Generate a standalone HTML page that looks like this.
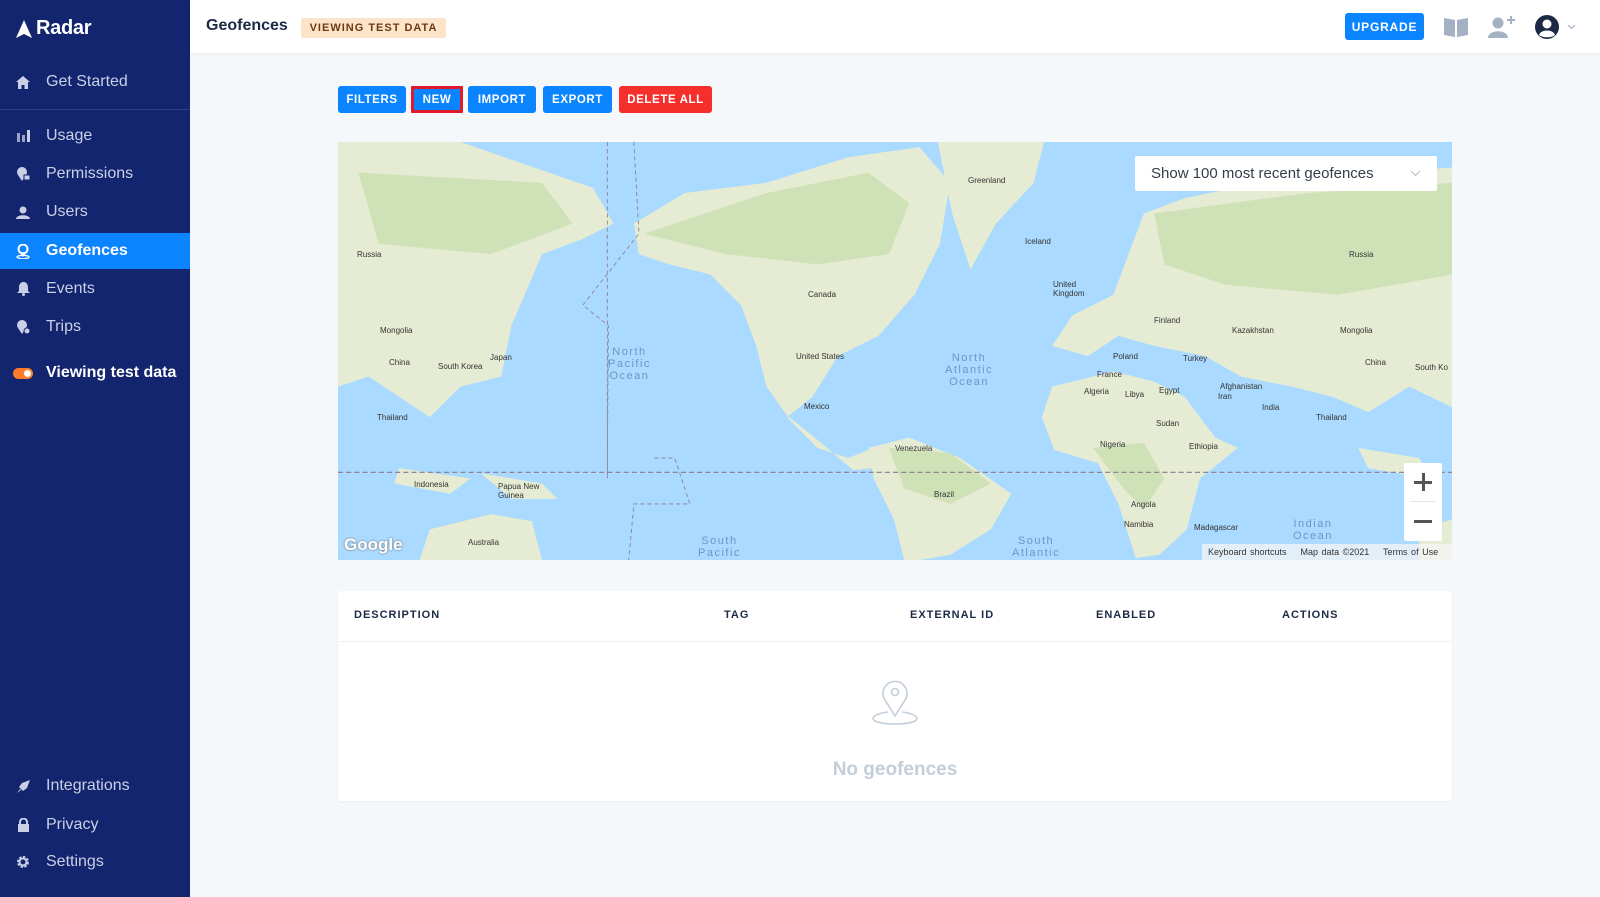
<!DOCTYPE html>
<html><head><meta charset="utf-8"><style>
*{box-sizing:border-box;margin:0;padding:0}
body{width:1600px;height:897px;overflow:hidden;background:#f5f8fb;font-family:"Liberation Sans",sans-serif;position:relative}
.sb{position:absolute;left:0;top:0;width:190px;height:897px;background:#12256e}
.logo{position:absolute;left:16px;top:17px;color:#fff;font-weight:bold;font-size:20px;display:flex;align-items:center;gap:4px;letter-spacing:-0.3px}
.div{position:absolute;left:0;width:190px;height:1px;background:#2d3f86}
.it{position:absolute;left:0;width:190px;height:36px;display:flex;align-items:center;color:#c9d0e6;font-size:16px}
.it .ic{width:46px;display:flex;justify-content:center}
.it.act{background:#0a84ff;color:#fff;font-weight:bold}
.hdr{position:absolute;left:190px;top:0;right:0;height:53px;background:#fff;box-shadow:0 1px 3px rgba(0,0,0,.06)}
.btn{position:absolute;top:86px;height:27px;border-radius:3px;color:#fff;font-weight:bold;font-size:11.5px;letter-spacing:.6px;display:flex;align-items:center;justify-content:center;background:#0a84ff}
.map{position:absolute;left:338px;top:142px;width:1114px;height:418px;background:#aadaff;overflow:hidden}
.lbl{position:absolute;font-size:8px;color:#333}
.ocean{position:absolute;font-size:11px;color:#6d95c4;letter-spacing:1.5px;text-align:center;line-height:12px}
.tbl{position:absolute;left:338px;top:591px;width:1114px;height:210px;background:#fff;border-radius:3px;box-shadow:0 1px 2px rgba(0,0,0,.05)}
.th{position:absolute;top:18px;font-size:11px;font-weight:bold;letter-spacing:1px;color:#1c2a45}
</style></head><body>
<div class="sb">
 <div class="logo"><svg width="16" height="18" viewBox="0 0 16 18"><path d="M8 0L16 18L8 14L0 18Z" fill="#fff"/></svg>Radar</div>
 <div class="div" style="top:109px"></div>
 <div class="it" style="top:64px"><span class="ic"><svg width="14" height="13" viewBox="0 0 14 13"><path d="M7 0L14 6H12V13H8.5V9H5.5V13H2V6H0Z" fill="#c9d0e6"/></svg></span>Get Started</div>
 <div class="it" style="top:118px"><span class="ic"><svg width="13" height="12"><rect x="0" y="3" width="3" height="9" fill="#9aa3c4"/><rect x="5" y="5" width="3" height="7" fill="#9aa3c4"/><rect x="10" y="0" width="3" height="12" fill="#c9d0e6"/></svg></span>Usage</div>
 <div class="it" style="top:156px"><span class="ic"><svg width="14" height="14"><circle cx="6" cy="5" r="5" fill="#c9d0e6"/><path d="M2 8L6 14L10 8Z" fill="#c9d0e6"/><rect x="8" y="8" width="6" height="5" fill="#c9d0e6" stroke="#12256e"/></svg></span>Permissions</div>
 <div class="it" style="top:194px"><span class="ic"><svg width="14" height="13"><circle cx="7" cy="4" r="3.5" fill="#c9d0e6"/><path d="M0 13C0 8 14 8 14 13Z" fill="#c9d0e6"/></svg></span>Users</div>
 <div class="it act" style="top:233px"><span class="ic"><svg width="14" height="15"><circle cx="7" cy="5" r="4.5" fill="none" stroke="#fff" stroke-width="2"/><path d="M3 8L7 13L11 8" fill="#fff"/><ellipse cx="7" cy="13" rx="6" ry="1.6" fill="none" stroke="#fff" stroke-width="1.3"/></svg></span>Geofences</div>
 <div class="it" style="top:271px"><span class="ic"><svg width="13" height="14"><path d="M6.5 0C10 0 11 3 11 6V9L13 11H0L2 9V6C2 3 3 0 6.5 0Z" fill="#c9d0e6"/><circle cx="6.5" cy="12.5" r="1.5" fill="#c9d0e6"/></svg></span>Events</div>
 <div class="it" style="top:309px"><span class="ic"><svg width="14" height="14"><circle cx="6" cy="5" r="5" fill="#c9d0e6"/><path d="M2 8L6 14L10 8Z" fill="#c9d0e6"/><circle cx="11" cy="11" r="3" fill="#c9d0e6" stroke="#12256e"/></svg></span>Trips</div>
 <div class="it" style="top:355px;color:#fff;font-weight:bold"><span class="ic"><span style="width:20px;height:11px;border-radius:6px;background:#ff7a2b;position:relative;display:block"><span style="position:absolute;right:2px;top:2px;width:7px;height:7px;border-radius:50%;background:#fff"></span></span></span>Viewing test data</div>
 <div class="it" style="top:768px"><span class="ic"><svg width="13" height="13"><path d="M13 0L5 3L2 7L6 11L10 8Z" fill="#c9d0e6"/><path d="M3 9L0 13L4 10Z" fill="#c9d0e6"/></svg></span>Integrations</div>
 <div class="it" style="top:807px"><span class="ic"><svg width="11" height="14"><path d="M2 6V4A3.5 3.5 0 0 1 9 4V6" fill="none" stroke="#c9d0e6" stroke-width="2"/><rect x="0" y="6" width="11" height="8" fill="#c9d0e6"/></svg></span>Privacy</div>
 <div class="it" style="top:844px"><span class="ic"><svg width="14" height="14" viewBox="0 0 14 14"><circle cx="7" cy="7" r="4.5" fill="none" stroke="#c9d0e6" stroke-width="3" stroke-dasharray="2.2 1.3"/><circle cx="7" cy="7" r="3.5" fill="none" stroke="#c9d0e6" stroke-width="2"/></svg></span>Settings</div>
</div>
<div class="hdr">
 <div style="position:absolute;left:16px;top:17px;font-size:16px;font-weight:bold;color:#1c2a45">Geofences</div>
 <div style="position:absolute;left:111px;top:18px;width:145px;height:20px;background:#fde3c8;border-radius:2px;color:#6b3a12;font-size:11px;font-weight:bold;letter-spacing:1px;display:flex;align-items:center;justify-content:center">VIEWING TEST DATA</div>
 <div style="position:absolute;left:1155px;top:13px;width:79px;height:27px;background:#0a84ff;border-radius:3px;color:#fff;font-size:12px;font-weight:bold;letter-spacing:.8px;display:flex;align-items:center;justify-content:center">UPGRADE</div>
 <svg style="position:absolute;left:1254px;top:16px" width="24" height="21"><path d="M0 2L11 4V21L0 19Z M13 4L24 2V19L13 21Z" fill="#a3b1c2"/></svg>
 <svg style="position:absolute;left:1298px;top:15px" width="28" height="24"><circle cx="10" cy="8" r="5.5" fill="#a3b1c2"/><path d="M0 23C0 14 20 14 20 23Z" fill="#a3b1c2"/><path d="M23 1V9M19 5H27" stroke="#a3b1c2" stroke-width="2"/></svg>
 <svg style="position:absolute;left:1344px;top:14px" width="26" height="26"><circle cx="13" cy="13" r="12" fill="#1c2a45"/><circle cx="13" cy="10" r="4.5" fill="#fff"/><path d="M5 21C7 15 19 15 21 21C18 24 8 24 5 21Z" fill="#fff"/></svg>
 <svg style="position:absolute;left:1377px;top:24px" width="9" height="6"><path d="M1 1L4.5 4.5L8 1" fill="none" stroke="#a3b1c2" stroke-width="1.2"/></svg>
</div>
<div class="btn" style="left:338px;width:68px">FILTERS</div>
<div class="btn" style="left:411px;width:52px;border:3px solid #e0192b;border-radius:1px">NEW</div>
<div class="btn" style="left:468px;width:68px">IMPORT</div>
<div class="btn" style="left:543px;width:69px">EXPORT</div>
<div class="btn" style="left:619px;width:93px;background:#f5302c">DELETE ALL</div>
<div class="map">
<svg width="1114" height="418" viewBox="0 0 1092 410" preserveAspectRatio="none" style="position:absolute;left:0;top:0">
<g fill="#e6ecd3">
<path d="M0 0L120 0L250 45L270 80L240 95L200 110L170 180L160 230L120 240L90 270L60 250L30 230L0 240Z"/>
<path d="M290 80L340 50L420 40L500 15L570 5L600 40L590 100L565 150L530 190L490 210L465 250L440 270L470 300L500 310L520 302L540 318L505 322L470 292L440 268L420 240L410 200L395 160L365 130L325 120L295 110Z"/>
<path d="M588 0L692 0L682 40L645 80L620 125L602 70Z"/>
<path d="M520 300L560 290L610 310L660 345L640 380L600 405L570 410L555 410L545 370L525 330Z"/>
<path d="M700 200L720 170L760 150L790 70L830 55L880 45L960 35L1092 25L1092 260L1050 240L1010 265L975 250L935 240L885 230L850 210L800 200L765 190L735 210Z"/>
<path d="M700 240L760 225L800 235L830 250L860 290L882 300L845 330L832 380L805 405L782 408L765 355L745 315L702 302L690 270Z"/>
<path d="M90 380L150 365L190 372L200 410L80 410Z"/>
<path d="M140 325L200 335L215 350L170 350Z"/>
<path d="M60 320L130 330L110 345L55 335Z"/>
<path d="M1000 300L1060 310L1070 330L1010 320Z"/>
<path d="M1060 380L1092 370L1092 410L1060 410Z"/>
</g>
<g fill="#c9e0b0" opacity=".8">
<path d="M300 90L420 50L520 30L560 60L540 110L470 120L380 110Z"/>
<path d="M800 70L950 50L1092 40L1092 130L980 150L870 140L810 120Z"/>
<path d="M20 30L200 40L230 80L150 110L40 100Z"/>
<path d="M540 300L600 305L640 335L600 355L555 340Z"/>
<path d="M740 300L790 295L810 330L790 360L770 340Z"/>
</g>
<path d="M0 324H1092" stroke="#8a7a8a" stroke-width="1" stroke-dasharray="5 3" fill="none"/>
<path d="M264 0V330M290 0L295 90L240 160L265 180L264 330M310 310H330L345 355H290L285 410" stroke="#8a7a8a" stroke-width="0.8" stroke-dasharray="4 3" fill="none"/>
</svg>
<div class="lbl" style="left:630px;top:34px">Greenland</div>
<div class="lbl" style="left:470px;top:148px">Canada</div>
<div class="lbl" style="left:458px;top:210px">United States</div>
<div class="lbl" style="left:466px;top:260px">Mexico</div>
<div class="lbl" style="left:557px;top:302px">Venezuela</div>
<div class="lbl" style="left:596px;top:348px">Brazil</div>
<div class="lbl" style="left:19px;top:108px">Russia</div>
<div class="lbl" style="left:1011px;top:108px">Russia</div>
<div class="lbl" style="left:42px;top:184px">Mongolia</div>
<div class="lbl" style="left:894px;top:184px">Kazakhstan</div>
<div class="lbl" style="left:1002px;top:184px">Mongolia</div>
<div class="lbl" style="left:1027px;top:216px">China</div>
<div class="lbl" style="left:1077px;top:221px">South Ko</div>
<div class="lbl" style="left:51px;top:216px">China</div>
<div class="lbl" style="left:100px;top:220px">South Korea</div>
<div class="lbl" style="left:152px;top:211px">Japan</div>
<div class="lbl" style="left:39px;top:271px">Thailand</div>
<div class="lbl" style="left:978px;top:271px">Thailand</div>
<div class="lbl" style="left:924px;top:261px">India</div>
<div class="lbl" style="left:76px;top:338px">Indonesia</div>
<div class="lbl" style="left:160px;top:340px">Papua New<br>Guinea</div>
<div class="lbl" style="left:130px;top:396px">Australia</div>
<div class="lbl" style="left:746px;top:245px">Algeria</div>
<div class="lbl" style="left:787px;top:248px">Libya</div>
<div class="lbl" style="left:821px;top:244px">Egypt</div>
<div class="lbl" style="left:762px;top:298px">Nigeria</div>
<div class="lbl" style="left:818px;top:277px">Sudan</div>
<div class="lbl" style="left:851px;top:300px">Ethiopia</div>
<div class="lbl" style="left:793px;top:358px">Angola</div>
<div class="lbl" style="left:786px;top:378px">Namibia</div>
<div class="lbl" style="left:856px;top:381px">Madagascar</div>
<div class="lbl" style="left:775px;top:210px">Poland</div>
<div class="lbl" style="left:816px;top:174px">Finland</div>
<div class="lbl" style="left:759px;top:228px">France</div>
<div class="lbl" style="left:845px;top:212px">Turkey</div>
<div class="lbl" style="left:880px;top:250px">Iran</div>
<div class="lbl" style="left:882px;top:240px">Afghanistan</div>
<div class="lbl" style="left:715px;top:138px">United<br>Kingdom</div>
<div class="lbl" style="left:687px;top:95px">Iceland</div>
<div class="ocean" style="left:270px;top:204px">North<br>Pacific<br>Ocean</div>
<div class="ocean" style="left:607px;top:210px">North<br>Atlantic<br>Ocean</div>
<div class="ocean" style="left:360px;top:393px">South<br>Pacific</div>
<div class="ocean" style="left:674px;top:393px">South<br>Atlantic</div>
<div class="ocean" style="left:955px;top:376px">Indian<br>Ocean</div>
<div style="position:absolute;left:6px;top:393px;font-size:17px;font-weight:bold;color:#fff;text-shadow:0 0 2px #666">Google</div>
<div style="position:absolute;left:864px;top:402px;height:16px;width:250px;background:rgba(245,245,245,.75);font-size:9px;color:#333;padding:3px 6px;word-spacing:1px">Keyboard shortcuts &nbsp;&nbsp; Map data ©2021 &nbsp;&nbsp; Terms of Use</div>
<div style="position:absolute;left:797px;top:14px;width:302px;height:35px;background:#fff;border-radius:2px;font-size:15px;color:#333d4a;padding:9px 16px">Show 100 most recent geofences<svg style="position:absolute;right:16px;top:14px" width="11" height="7"><path d="M1 1L5.5 5.5L10 1" fill="none" stroke="#b9c2cc" stroke-width="1.2"/></svg></div>
<div style="position:absolute;left:1066px;top:321px;width:38px;height:78px;background:#fff;border-radius:2px">
 <div style="position:absolute;left:10px;top:18px;width:18px;height:3px;background:#555"></div>
 <div style="position:absolute;left:17.5px;top:10px;width:3px;height:18px;background:#555"></div>
 <div style="position:absolute;left:6px;top:38px;width:26px;height:1px;background:#e5e5e5"></div>
 <div style="position:absolute;left:10px;top:57px;width:18px;height:3px;background:#555"></div>
</div>
</div>
<div class="tbl">
 <div class="th" style="left:16px">DESCRIPTION</div>
 <div class="th" style="left:386px">TAG</div>
 <div class="th" style="left:572px">EXTERNAL ID</div>
 <div class="th" style="left:758px">ENABLED</div>
 <div class="th" style="left:944px">ACTIONS</div>
 <div style="position:absolute;left:0;top:50px;width:100%;height:1px;background:#eef1f4"></div>
 <svg style="position:absolute;left:534px;top:87px" width="46" height="48" viewBox="0 0 46 48"><path d="M23 38L13 22A12 12 0 1 1 33 22Z" fill="none" stroke="#c4ced9" stroke-width="1.6"/><circle cx="23" cy="14" r="3.5" fill="none" stroke="#c4ced9" stroke-width="1.6"/><path d="M16 34C7 35 1 38 1 40.5C1 44 11 46 23 46C35 46 45 44 45 40.5C45 38 39 35 30 34" fill="none" stroke="#c4ced9" stroke-width="1.6"/></svg>
 <div style="position:absolute;left:0;width:100%;top:168px;text-align:center;font-size:19px;font-weight:bold;color:#c4ced9">No geofences</div>
</div>
</body></html>
